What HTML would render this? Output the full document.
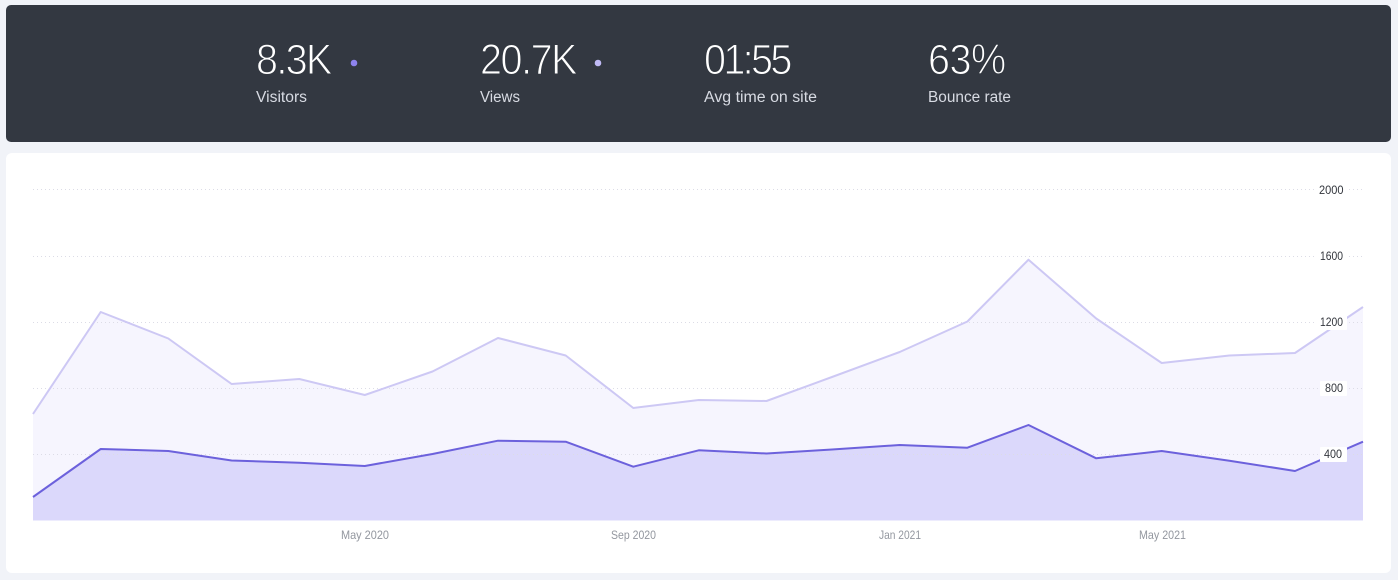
<!DOCTYPE html>
<html>
<head>
<meta charset="utf-8">
<style>
html,body{margin:0;padding:0;background:#f1f3f8;width:1398px;height:580px;overflow:hidden}
svg{display:block;position:absolute;left:0;top:0}
text{font-family:"Liberation Sans",sans-serif}
.big{font-size:43px;fill:#fff;stroke:#333841;stroke-width:1.1px}
.lab{font-size:15.5px;fill:#d8dbe3}
.ax{font-size:12px;fill:#33363d}
.xl{font-size:12px;fill:#93979f}
</style>
</head>
<body>
<svg width="1398" height="580" viewBox="0 0 1398 580" xmlns="http://www.w3.org/2000/svg">
  <rect x="6" y="5" width="1385" height="137" rx="5" fill="#333841"/>
  <rect x="6" y="153" width="1385" height="420" rx="6" fill="#ffffff"/>

  <text class="big" transform="translate(256,74) scale(.92,1)" textLength="83" lengthAdjust="spacing">8.3K</text>
  <text class="lab" x="256" y="102" textLength="51" lengthAdjust="spacingAndGlyphs">Visitors</text>
  <circle cx="354" cy="63" r="3.3" fill="#8e83ee"/>

  <text class="big" transform="translate(480,74) scale(.92,1)" textLength="106" lengthAdjust="spacing">20.7K</text>
  <text class="lab" x="480" y="102" textLength="40" lengthAdjust="spacingAndGlyphs">Views</text>
  <circle cx="598" cy="63" r="3.3" fill="#c0baf5"/>

  <text class="big" transform="translate(704,74) scale(.92,1)" textLength="96" lengthAdjust="spacing">01:55</text>
  <text class="lab" x="704" y="102" textLength="113" lengthAdjust="spacingAndGlyphs">Avg time on site</text>

  <text class="big" transform="translate(928,74) scale(.92,1)" textLength="85" lengthAdjust="spacing">63%</text>
  <text class="lab" x="928" y="102" textLength="83" lengthAdjust="spacingAndGlyphs">Bounce rate</text>

  <polygon fill="#f6f5fe" points="33,414 100.7,312 168.3,338.5 231.6,384 299.3,379 364.8,395 432.5,371.5 498,338 565.7,355.5 633.3,408 698.8,400 766.5,401 832,377 899.7,352 967.4,321.5 1028.5,259.7 1096.2,318.5 1161.7,363 1229.4,355.5 1295,353 1363,307 1363,520.5 33,520.5"/>
  <polygon fill="#dbd8fb" points="33,497 100.7,449 168.3,451 231.6,460.5 299.3,462.7 364.8,466 432.5,454 498,440.7 565.7,441.7 633.3,466.7 698.8,450.3 766.5,453.5 832,449.5 899.7,445 967.4,447.7 1028.5,425 1096.2,458.3 1161.7,451 1229.4,460.7 1295,471 1363,441.7 1363,520.5 33,520.5"/>

  <g stroke="#dcdce6" stroke-width="1" stroke-dasharray="1 3" fill="none">
    <line x1="33" y1="189.5" x2="1363" y2="189.5"/>
    <line x1="33" y1="256.5" x2="1363" y2="256.5"/>
    <line x1="33" y1="322.5" x2="1363" y2="322.5"/>
    <line x1="33" y1="388.5" x2="1363" y2="388.5"/>
    <line x1="33" y1="454.5" x2="1363" y2="454.5"/>
  </g>

  <polyline fill="none" stroke="#cdc8f4" stroke-width="2" stroke-linejoin="round" points="33,414 100.7,312 168.3,338.5 231.6,384 299.3,379 364.8,395 432.5,371.5 498,338 565.7,355.5 633.3,408 698.8,400 766.5,401 832,377 899.7,352 967.4,321.5 1028.5,259.7 1096.2,318.5 1161.7,363 1229.4,355.5 1295,353 1363,307"/>
  <polyline fill="none" stroke="#6c61dc" stroke-width="2" stroke-linejoin="round" points="33,497 100.7,449 168.3,451 231.6,460.5 299.3,462.7 364.8,466 432.5,454 498,440.7 565.7,441.7 633.3,466.7 698.8,450.3 766.5,453.5 832,449.5 899.7,445 967.4,447.7 1028.5,425 1096.2,458.3 1161.7,451 1229.4,460.7 1295,471 1363,441.7"/>

  <g fill="#ffffff">
    <rect x="1316" y="182" width="31" height="15" rx="1"/>
    <rect x="1316" y="249" width="31" height="15" rx="1"/>
    <rect x="1316" y="315" width="31" height="15" rx="1"/>
    <rect x="1320" y="381" width="27" height="15" rx="1"/>
    <rect x="1320" y="447" width="27" height="15" rx="1"/>
  </g>
  <text class="ax" x="1319" y="194" textLength="24.5" lengthAdjust="spacingAndGlyphs">2000</text>
  <text class="ax" x="1320" y="260" textLength="23" lengthAdjust="spacingAndGlyphs">1600</text>
  <text class="ax" x="1320" y="326" textLength="23" lengthAdjust="spacingAndGlyphs">1200</text>
  <text class="ax" x="1325" y="392" textLength="18" lengthAdjust="spacingAndGlyphs">800</text>
  <text class="ax" x="1324" y="458" textLength="18" lengthAdjust="spacingAndGlyphs">400</text>

  <text class="xl" x="341" y="539" textLength="48" lengthAdjust="spacingAndGlyphs">May 2020</text>
  <text class="xl" x="611" y="539" textLength="45" lengthAdjust="spacingAndGlyphs">Sep 2020</text>
  <text class="xl" x="879" y="539" textLength="42" lengthAdjust="spacingAndGlyphs">Jan 2021</text>
  <text class="xl" x="1139" y="539" textLength="47" lengthAdjust="spacingAndGlyphs">May 2021</text>
</svg>
</body>
</html>
